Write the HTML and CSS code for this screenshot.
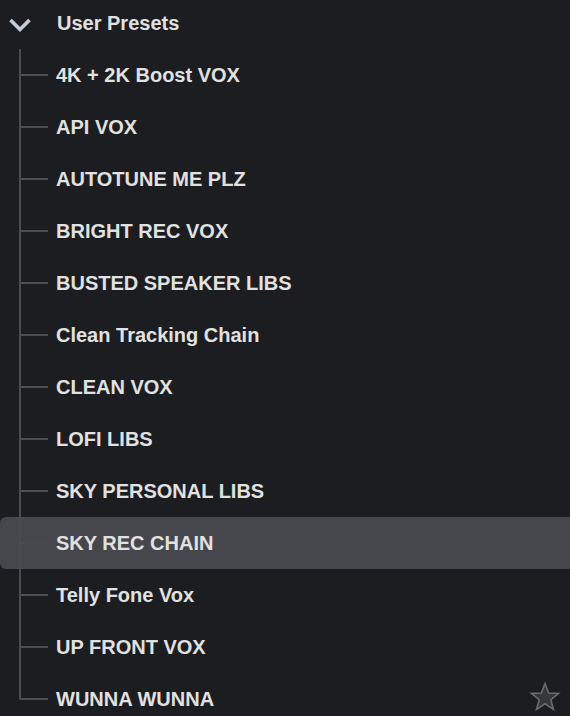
FILE: index.html
```html
<!DOCTYPE html>
<html>
<head>
<meta charset="utf-8">
<link rel="stylesheet" href="styles.css">
</head>
<body>
<div class="panel">
  <div class="header">
    <svg class="chevron" width="24" height="16" viewBox="0 0 24 16"><path d="M2.5 3 L12 12.5 L21.5 3" fill="none" stroke="#c2cdd8" stroke-width="3.6" stroke-linecap="butt" stroke-linejoin="miter"/></svg>
    <span class="label">User Presets</span>
  </div>
  <ul class="tree">
    <li class="item"><span class="label">4K + 2K Boost VOX</span></li>
    <li class="item"><span class="label">API VOX</span></li>
    <li class="item"><span class="label">AUTOTUNE ME PLZ</span></li>
    <li class="item"><span class="label">BRIGHT REC VOX</span></li>
    <li class="item"><span class="label">BUSTED SPEAKER LIBS</span></li>
    <li class="item"><span class="label">Clean Tracking Chain</span></li>
    <li class="item"><span class="label">CLEAN VOX</span></li>
    <li class="item"><span class="label">LOFI LIBS</span></li>
    <li class="item"><span class="label">SKY PERSONAL LIBS</span></li>
    <li class="item selected"><span class="label">SKY REC CHAIN</span></li>
    <li class="item"><span class="label">Telly Fone Vox</span></li>
    <li class="item"><span class="label">UP FRONT VOX</span></li>
    <li class="item last"><span class="label">WUNNA WUNNA</span></li>
  </ul>
  <svg class="star" width="32" height="32" viewBox="0 0 32 32"><path d="M16 2.5 L19.6 12 L29.6 12.4 L21.8 18.7 L24.5 28.4 L16 22.8 L7.5 28.4 L10.2 18.7 L2.4 12.4 L12.4 12 Z" fill="#36373b" stroke="#6a6b70" stroke-width="1.6" stroke-linejoin="miter"/></svg>
</div>
</body>
</html>
```
FILE: styles.css
```css
html, body {
  margin: 0;
  padding: 0;
  background: #1c1d20;
  overflow: hidden;
}
.panel {
  position: relative;
  width: 570px;
  height: 716px;
  font-family: "Liberation Sans", Arial, sans-serif;
  font-weight: bold;
  font-size: 20px;
  color: #e1e1e1;
}
.header {
  display: flex;
  align-items: center;
  height: 52px;
  margin-top: -3px;
}
.chevron {
  margin-left: 8px;
  margin-top: 4px;
}
.header .label {
  margin-left: 25px;
}
.tree {
  list-style: none;
  margin: 0;
  padding: 0;
}
.item {
  position: relative;
  display: flex;
  align-items: center;
  height: 52px;
  padding-left: 56px;
}
.item::before {
  content: "";
  position: absolute;
  left: 19px;
  top: 0;
  bottom: 0;
  width: 2px;
  background: #4b4c50;
}
.item.last::before {
  bottom: 26px;
}
.item::after {
  content: "";
  position: absolute;
  left: 19px;
  top: 25px;
  width: 29px;
  height: 2px;
  background: #4b4c50;
}
.item.selected {
  background: #46474c;
  border-radius: 6px 0 0 6px;
}
.label {
  line-height: 1;
  margin-top: 0;
}
.star {
  position: absolute;
  right: 9px;
  bottom: 0px;
}
```
